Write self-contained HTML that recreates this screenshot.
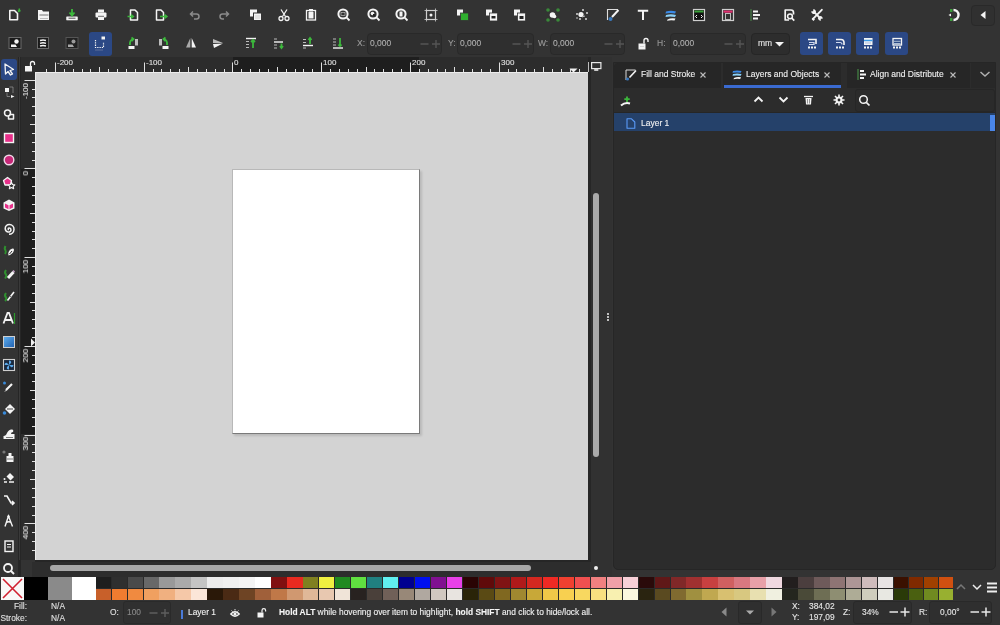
<!DOCTYPE html><html><head><meta charset="utf-8"><style>
html,body{margin:0;padding:0;width:1000px;height:625px;overflow:hidden;background:#333333;font-family:"Liberation Sans",sans-serif;}
body>div,body>span,body>svg{position:absolute;display:block;}
span{white-space:nowrap;line-height:1;will-change:transform;-webkit-text-stroke:0.1px currentColor;}
</style></head><body>
<div style="left:0px;top:0px;width:1000px;height:57px;background:#333333;"></div>
<div style="left:0px;top:57px;width:18px;height:520px;background:#333333;"></div>
<div style="left:18px;top:57px;width:3px;height:520px;background:#262626;"></div>
<div style="left:19px;top:57px;width:1px;height:503px;background:#3a3a3a;"></div>
<div style="left:21px;top:57px;width:567px;height:15px;background:#2c2c2c;"></div>
<div style="left:21px;top:72px;width:14px;height:488px;background:#2c2c2c;"></div>
<div style="left:233px;top:57px;width:186px;height:15px;background:#1e1e1e;"></div>
<div style="left:21px;top:169px;width:14px;height:265px;background:#1e1e1e;"></div>
<div style="left:35px;top:72px;width:553px;height:488px;background:#d3d3d3;"></div>
<div style="left:232px;top:169px;width:188px;height:265px;background:#ffffff;border-top:1px solid #b8b8b8;border-left:1px solid #b8b8b8;border-right:1px solid #7a7a7a;border-bottom:1px solid #7a7a7a;box-sizing:border-box;box-shadow:2px 2px 2px rgba(0,0,0,0.12);"></div>
<div style="left:35px;top:72px;width:553px;height:1px;background:#ececec;"></div>
<div style="left:35px;top:72px;width:1px;height:488px;background:#ececec;"></div>
<div style="left:21px;top:560px;width:591px;height:17px;background:#333333;"></div>
<div style="left:32px;top:562px;width:580px;height:15px;background:#2d2d2d;"></div>
<div style="left:35px;top:560px;width:555px;height:2px;background:#262626;"></div>
<div style="left:50px;top:565px;width:481px;height:6px;background:#a8a8a8;border-radius:3px;"></div>
<div style="left:590px;top:57px;width:22px;height:520px;background:#313131;"></div>
<div style="left:588px;top:57px;width:2.5px;height:505px;background:#262626;"></div>
<div style="left:594px;top:565.5px;width:4px;height:4px;background:#f0f0f0;border-radius:2px;"></div>
<div style="left:593px;top:193px;width:6px;height:264px;background:#aaaaaa;border-radius:3px;"></div>
<div style="left:606.5px;top:312.5px;width:2px;height:2px;background:#f0f0f0;border-radius:1px;"></div>
<div style="left:606.5px;top:315.8px;width:2px;height:2px;background:#f0f0f0;border-radius:1px;"></div>
<div style="left:606.5px;top:318.8px;width:2px;height:2px;background:#f0f0f0;border-radius:1px;"></div>
<div style="left:0px;top:577px;width:1000px;height:24px;background:#333333;"></div>
<div style="left:0px;top:601px;width:1000px;height:24px;background:#333333;"></div>
<svg style="left:6.5px;top:6.7px;" width="16" height="16" viewBox="0 0 16 16"><path d="M2.8 3.5H7.5L10.5 6.5V12.8H2.8Z" stroke="#f4f4f4" stroke-width="1.6" fill="none" stroke-linejoin="round"/><path d="M12.5 1.5L11.5 5M13.5 3.5L11 4.5" stroke="#3cb83c" stroke-width="1.4"/></svg>
<svg style="left:35.7px;top:6.7px;" width="16" height="16" viewBox="0 0 16 16"><path d="M2 3H6L7 4.5H13V13H2Z" fill="#f4f4f4"/><path d="M3.5 8H12.5" stroke="#555" stroke-width="0.8"/><path d="M4 11.5H12" stroke="#999" stroke-width="0.6"/></svg>
<svg style="left:64.0px;top:6.7px;" width="16" height="16" viewBox="0 0 16 16"><path d="M2.5 10V13H13.5V10" fill="#f4f4f4"/><rect x="2.5" y="9.5" width="11" height="3.8" fill="#f4f4f4"/><path d="M4.5 11.2H11.5" stroke="#555" stroke-width="1"/><path d="M8 2V8M5.5 5.5L8 8.5L10.5 5.5" stroke="#3cb83c" stroke-width="1.8" fill="none"/></svg>
<svg style="left:93.0px;top:6.7px;" width="16" height="16" viewBox="0 0 16 16"><rect x="5" y="2.5" width="6" height="3" fill="#f4f4f4"/><rect x="2.5" y="5.5" width="11" height="5" rx="1" fill="#f4f4f4"/><rect x="5" y="9" width="6" height="4" fill="#f4f4f4"/><path d="M5 9.3H11" stroke="#444" stroke-width="0.8"/></svg>
<svg style="left:125.8px;top:6.7px;" width="16" height="16" viewBox="0 0 16 16"><path d="M4.5 3H9L11.5 5.5V13H4.5Z" stroke="#f4f4f4" stroke-width="1.5" fill="none" stroke-linejoin="round"/><path d="M1.5 9.5H7.5M5 7.5L7.5 9.5L5 11.5" stroke="#3cb83c" stroke-width="1.4" fill="none"/></svg>
<svg style="left:153.0px;top:6.7px;" width="16" height="16" viewBox="0 0 16 16"><path d="M3.5 3H8L10.5 5.5V13H3.5Z" stroke="#f4f4f4" stroke-width="1.5" fill="none" stroke-linejoin="round"/><path d="M7 9.5H14M11.5 7.5L14 9.5L11.5 11.5" stroke="#3cb83c" stroke-width="1.4" fill="none"/></svg>
<svg style="left:187.0px;top:6.7px;" width="16" height="16" viewBox="0 0 16 16"><path d="M4 7H9.5A2.5 2.5 0 0 1 9.5 12H7M6 4.5L3.5 7L6 9.5" stroke="#8a8a8a" stroke-width="1.5" fill="none"/></svg>
<svg style="left:216.0px;top:6.7px;" width="16" height="16" viewBox="0 0 16 16"><path d="M12 7H6.5A2.5 2.5 0 0 0 6.5 12H8M10 4.5L12.5 7L10 9.5" stroke="#8a8a8a" stroke-width="1.5" fill="none"/></svg>
<svg style="left:247.6px;top:6.7px;" width="16" height="16" viewBox="0 0 16 16"><rect x="2" y="2.5" width="7" height="7" fill="#f4f4f4"/><rect x="5.5" y="6" width="8" height="7.5" fill="#f4f4f4" stroke="#333" stroke-width="1"/><path d="M7 9H12M7 11H12" stroke="#bbb" stroke-width="0.6"/></svg>
<svg style="left:275.8px;top:6.7px;" width="16" height="16" viewBox="0 0 16 16"><path d="M5 2.5L9.5 9.5M11 2.5L6.5 9.5" stroke="#f4f4f4" stroke-width="1.3"/><circle cx="5" cy="11.5" r="2" stroke="#f4f4f4" stroke-width="1.3" fill="none"/><circle cx="11" cy="11.5" r="2" stroke="#f4f4f4" stroke-width="1.3" fill="none"/></svg>
<svg style="left:303.0px;top:6.7px;" width="16" height="16" viewBox="0 0 16 16"><rect x="3.5" y="3.5" width="9" height="9.5" stroke="#f4f4f4" stroke-width="1.3" fill="none"/><rect x="5.5" y="5" width="5" height="6.5" fill="#f4f4f4"/><rect x="6" y="2" width="4" height="2.5" fill="#f4f4f4"/></svg>
<svg style="left:335.8px;top:6.7px;" width="16" height="16" viewBox="0 0 16 16"><circle cx="7" cy="7" r="4.6" stroke="#f4f4f4" stroke-width="2" fill="none"/><path d="M10.2 10.2L13.5 13.5" stroke="#f4f4f4" stroke-width="1.8"/><rect x="5" y="5.5" width="4" height="3" stroke="#bbb" stroke-width="0.7" fill="none"/></svg>
<svg style="left:365.8px;top:6.7px;" width="16" height="16" viewBox="0 0 16 16"><circle cx="7" cy="7" r="4.6" stroke="#f4f4f4" stroke-width="2" fill="none"/><path d="M10.2 10.2L13.5 13.5" stroke="#f4f4f4" stroke-width="1.8"/><circle cx="6.5" cy="6.5" r="1.8" fill="#f4f4f4"/><rect x="7" y="7" width="2.2" height="2.2" fill="#222"/></svg>
<svg style="left:394.0px;top:6.7px;" width="16" height="16" viewBox="0 0 16 16"><circle cx="7" cy="7" r="4.6" stroke="#f4f4f4" stroke-width="2" fill="none"/><path d="M10.2 10.2L13.5 13.5" stroke="#f4f4f4" stroke-width="1.8"/><rect x="5.5" y="4.5" width="3" height="5" fill="#f4f4f4"/></svg>
<svg style="left:422.6px;top:6.7px;" width="16" height="16" viewBox="0 0 16 16"><rect x="3.5" y="3.5" width="9" height="9" stroke="#cfcfcf" stroke-width="1.2" fill="none"/><path d="M1.5 3.5H3.5V1.5M12.5 1.5V3.5H14.5M14.5 12.5H12.5V14.5M3.5 14.5V12.5H1.5" stroke="#cfcfcf" stroke-width="0.8" fill="none"/><circle cx="8" cy="8" r="1.5" fill="#f4f4f4"/></svg>
<svg style="left:454.5px;top:6.7px;" width="16" height="16" viewBox="0 0 16 16"><rect x="2" y="2.5" width="6" height="6" fill="#f4f4f4"/><rect x="5.5" y="6" width="8" height="7.5" fill="#2fae2f" stroke="#333" stroke-width="0.8"/></svg>
<svg style="left:484.0px;top:6.7px;" width="16" height="16" viewBox="0 0 16 16"><rect x="2" y="2.5" width="6" height="6" fill="#f4f4f4"/><rect x="5.5" y="6" width="8" height="8" fill="#f4f4f4" stroke="#333" stroke-width="0.8"/><rect x="7.5" y="9" width="4" height="2.5" fill="#222"/></svg>
<svg style="left:512.0px;top:6.7px;" width="16" height="16" viewBox="0 0 16 16"><rect x="2" y="2.5" width="6" height="6" fill="#f4f4f4"/><rect x="5.5" y="6" width="8" height="8" fill="#f4f4f4" stroke="#333" stroke-width="0.8"/><rect x="7.5" y="9" width="4" height="3" fill="#222"/></svg>
<svg style="left:544.5px;top:6.7px;" width="16" height="16" viewBox="0 0 16 16"><g fill="#3a8a3a"><circle cx="3" cy="3" r="1.8"/><circle cx="13" cy="3" r="1.8"/><circle cx="3" cy="13" r="1.8"/><circle cx="13" cy="13" r="1.8"/></g><circle cx="7.5" cy="8" r="2.8" fill="#f4f4f4"/><circle cx="9.5" cy="9.5" r="1.8" fill="#f4f4f4"/></svg>
<svg style="left:574.0px;top:6.7px;" width="16" height="16" viewBox="0 0 16 16"><g fill="#d8d8d8"><circle cx="3" cy="7" r="1"/><circle cx="9" cy="3" r="1"/><circle cx="13" cy="6" r="1"/><circle cx="12" cy="12" r="1"/><circle cx="6" cy="12" r="1"/><circle cx="3" cy="11" r="0.8"/></g><circle cx="7" cy="7.5" r="2.6" fill="#f4f4f4"/><path d="M8 10L11 9" stroke="#bbb" stroke-width="1"/></svg>
<svg style="left:604.5px;top:6.7px;" width="16" height="16" viewBox="0 0 16 16"><path d="M2.5 13V2.5H13" stroke="#ddd" stroke-width="1.1" fill="none"/><path d="M13.5 3L7 10" stroke="#f4f4f4" stroke-width="2"/><circle cx="5.5" cy="12" r="2" fill="#3a7ac0"/></svg>
<svg style="left:634.5px;top:6.7px;" width="16" height="16" viewBox="0 0 16 16"><path d="M2.8 3.8H13.2M8 3.8V13" stroke="#f4f4f4" stroke-width="2"/></svg>
<svg style="left:663.0px;top:6.7px;" width="16" height="16" viewBox="0 0 16 16"><path d="M3 4.5Q8 3 13 4.5L12 6.5Q7 5.5 2.5 6.5Z" fill="#3a8ae8"/><path d="M3 8Q8 6.5 13 8L12 10Q7 9 2.5 10Z" fill="#8ad0f8"/><path d="M4.5 12.5Q8 10.5 12.5 11.5L11.5 13.5Q7 13 4 13.8Z" fill="#f4f4f4"/></svg>
<svg style="left:691.0px;top:6.7px;" width="16" height="16" viewBox="0 0 16 16"><rect x="2.5" y="2.5" width="11" height="11" stroke="#cfcfcf" stroke-width="1.2" fill="#111"/><rect x="3.5" y="3.5" width="9" height="2" fill="#3aa03a"/><path d="M6 8L4.5 9.5L6 11M10 8L11.5 9.5L10 11" stroke="#f4f4f4" stroke-width="1" fill="none"/></svg>
<svg style="left:719.5px;top:6.7px;" width="16" height="16" viewBox="0 0 16 16"><rect x="2.5" y="2.5" width="11" height="11" stroke="#cfcfcf" stroke-width="1.2" fill="none"/><rect x="3.5" y="3.5" width="9" height="2.2" fill="#e03070"/><rect x="5.5" y="6.5" width="5" height="6" stroke="#bbb" stroke-width="1" fill="none"/></svg>
<svg style="left:748.0px;top:6.7px;" width="16" height="16" viewBox="0 0 16 16"><path d="M3 2V14" stroke="#4a8a4a" stroke-width="1"/><path d="M5 4.5H10M5 8H12M5 11.5H10" stroke="#f4f4f4" stroke-width="1.8"/></svg>
<svg style="left:782.0px;top:6.7px;" width="16" height="16" viewBox="0 0 16 16"><path d="M7 13H3.2V3H9A2.5 2.5 0 0 1 11.5 5.5V7.5" stroke="#f4f4f4" stroke-width="1.7" fill="none" stroke-linejoin="round"/><circle cx="8" cy="9.3" r="2.4" stroke="#f4f4f4" stroke-width="1.5" fill="none"/><path d="M9.8 11.1L12.3 13.6" stroke="#f4f4f4" stroke-width="1.7"/></svg>
<svg style="left:809.0px;top:6.7px;" width="16" height="16" viewBox="0 0 16 16"><path d="M12.8 2.8L4 11.8" stroke="#f4f4f4" stroke-width="1.9" stroke-linecap="round"/><path d="M3.5 13L5 11.5" stroke="#f4f4f4" stroke-width="2.6"/><path d="M6.2 6.2L10 10" stroke="#f4f4f4" stroke-width="1.8"/><path d="M2.3 4.2A2.6 2.6 0 0 0 6.5 6.5A2.6 2.6 0 0 0 4.2 2.3L4.2 4.2Z" fill="#f4f4f4"/><path d="M13.7 11.8A2.6 2.6 0 0 0 9.5 9.5A2.6 2.6 0 0 0 11.8 13.7L11.8 11.8Z" fill="#f4f4f4"/></svg>
<svg style="left:944.5px;top:6.7px;" width="16" height="16" viewBox="0 0 16 16"><path d="M8.5 3A5 5 0 0 1 8.5 13" stroke="#f4f4f4" stroke-width="2.4" fill="none"/><rect x="5" y="2" width="2.5" height="3" fill="#3a9a3a"/><rect x="5" y="11" width="2.5" height="3" fill="#3a9a3a"/><path d="M3.5 8L6 6.5V9.5Z" fill="#f4f4f4"/></svg>
<div style="left:970.5px;top:4.5px;width:24px;height:21.5px;background:#303030;border:1px solid #292929;box-sizing:border-box;border-radius:4px;"></div>
<svg style="left:977px;top:9px;" width="12" height="12" viewBox="0 0 12 12"><path d="M8.5 2V10L3.5 6Z" fill="#f4f4f4"/></svg>
<svg style="left:7.0px;top:35.0px;" width="16" height="16" viewBox="0 0 16 16"><rect x="2" y="2.5" width="12" height="11" fill="#1a1a1a" stroke="#6a6a6a" stroke-width="1"/><circle cx="9.5" cy="6.5" r="2.2" fill="#f4f4f4"/><path d="M4 12V9.5H8.5L10 12Z" fill="#f4f4f4"/></svg>
<svg style="left:35.0px;top:35.0px;" width="16" height="16" viewBox="0 0 16 16"><rect x="2.5" y="2.5" width="11" height="11" fill="#1a1a1a" stroke="#6a6a6a" stroke-width="1"/><path d="M5 5.5Q8 4.5 11 5.5M5 8.3Q8 7.3 11 8.3M5 11Q8 10 11 11" stroke="#f4f4f4" stroke-width="1.4" fill="none"/></svg>
<svg style="left:64.0px;top:35.0px;" width="16" height="16" viewBox="0 0 16 16"><rect x="2" y="2.5" width="12" height="11" fill="#222" stroke="#555" stroke-width="1"/><circle cx="9.5" cy="6.5" r="2" fill="#999"/><path d="M4 12V9.5H8.5L10 12Z" fill="#aaa"/></svg>
<div style="left:88.5px;top:32px;width:23.5px;height:23.5px;background:#2b4885;border-radius:3px;"></div>
<svg style="left:92.3px;top:35.0px;" width="16" height="16" viewBox="0 0 16 16"><path d="M3.5 5V12.5H11.5V7" stroke="#f4f4f4" stroke-width="1.2" stroke-dasharray="1.3 1" fill="none"/><rect x="9.5" y="1.5" width="3.5" height="3" fill="#f4f4f4"/><path d="M3.5 15H11.5" stroke="#aab" stroke-width="0.8" stroke-dasharray="1 1"/></svg>
<svg style="left:125.8px;top:35.0px;" width="16" height="16" viewBox="0 0 16 16"><path d="M4 10Q3.5 5 7 4M5.5 2.5L7.5 4L5.5 6" stroke="#3cb83c" stroke-width="1.8" fill="none"/><rect x="9" y="4" width="3" height="6.5" fill="#bdbdbd"/><rect x="2.5" y="11" width="6" height="3" fill="#f4f4f4"/></svg>
<svg style="left:154.5px;top:35.0px;" width="16" height="16" viewBox="0 0 16 16"><path d="M12 10Q12.5 5 9 4M10.5 2.5L8.5 4L10.5 6" stroke="#3cb83c" stroke-width="1.8" fill="none"/><rect x="4" y="4" width="3" height="6.5" fill="#bdbdbd"/><rect x="7.5" y="11" width="6" height="3" fill="#f4f4f4"/></svg>
<svg style="left:182.6px;top:35.0px;" width="16" height="16" viewBox="0 0 16 16"><path d="M7.3 3V12.5H3Z" fill="#aaa"/><path d="M8.7 3V12.5H13Z" fill="#f4f4f4"/></svg>
<svg style="left:209.5px;top:35.0px;" width="16" height="16" viewBox="0 0 16 16"><path d="M3 4L13 8L3 8Z" fill="#bbb"/><path d="M3 9L13 8.5L4 13Z" fill="#f4f4f4"/></svg>
<svg style="left:243.0px;top:35.0px;" width="16" height="16" viewBox="0 0 16 16"><path d="M3 3.5H13" stroke="#f4f4f4" stroke-width="1.4"/><path d="M3 6.5H6M3 9.5H6M3 12.5H6" stroke="#bbb" stroke-width="1"/><path d="M10 13V5M8 7L10 5L12 7" stroke="#3cb83c" stroke-width="1.8" fill="none"/></svg>
<svg style="left:271.0px;top:35.0px;" width="16" height="16" viewBox="0 0 16 16"><path d="M3 7H12" stroke="#f4f4f4" stroke-width="1.4"/><path d="M3 4H6M3 10H6M3 13H6" stroke="#bbb" stroke-width="1"/><path d="M10.5 13V8.5M9 11L10.5 13L12 11" stroke="#3cb83c" stroke-width="1.8" fill="none"/></svg>
<svg style="left:300.0px;top:35.0px;" width="16" height="16" viewBox="0 0 16 16"><path d="M3 10.5H13" stroke="#f4f4f4" stroke-width="1.4"/><path d="M3 4.5H6M3 7.5H6M3 13H6" stroke="#bbb" stroke-width="1"/><path d="M10 9V3M8.5 5L10 3L11.5 5" stroke="#3cb83c" stroke-width="1.8" fill="none"/></svg>
<svg style="left:329.5px;top:35.0px;" width="16" height="16" viewBox="0 0 16 16"><path d="M3 13H13" stroke="#f4f4f4" stroke-width="1.4"/><path d="M3 4H6M3 7H6M3 10H6" stroke="#bbb" stroke-width="1"/><path d="M10 3V11M8.5 9.5L10 11L11.5 9.5" stroke="#3cb83c" stroke-width="1.8" fill="none"/></svg>
<span style="left:356.5px;top:39px;font-size:8.5px;color:#9a9a9a;font-weight:normal;">X:</span>
<div style="left:367px;top:32.5px;width:75.3px;height:22.5px;background:#2f2f2f;border:1px solid #292929;box-sizing:border-box;border-radius:4px;"></div>
<span style="left:370px;top:39px;font-size:8.5px;color:#b0b0b0;font-weight:normal;">0,000</span>
<svg style="left:419.3px;top:38px;" width="22" height="12" viewBox="0 0 22 12"><path d="M1.5 6H9.5M13 6H21M17 2V10" stroke="#555555" stroke-width="1.4"/></svg>
<span style="left:447.5px;top:39px;font-size:8.5px;color:#9a9a9a;font-weight:normal;">Y:</span>
<div style="left:456.7px;top:32.5px;width:77px;height:22.5px;background:#2f2f2f;border:1px solid #292929;box-sizing:border-box;border-radius:4px;"></div>
<span style="left:459.7px;top:39px;font-size:8.5px;color:#b0b0b0;font-weight:normal;">0,000</span>
<svg style="left:510.70000000000005px;top:38px;" width="22" height="12" viewBox="0 0 22 12"><path d="M1.5 6H9.5M13 6H21M17 2V10" stroke="#555555" stroke-width="1.4"/></svg>
<span style="left:537.5px;top:39px;font-size:8.5px;color:#9a9a9a;font-weight:normal;">W:</span>
<div style="left:550.3px;top:32.5px;width:75.2px;height:22.5px;background:#2f2f2f;border:1px solid #292929;box-sizing:border-box;border-radius:4px;"></div>
<span style="left:553.3px;top:39px;font-size:8.5px;color:#b0b0b0;font-weight:normal;">0,000</span>
<svg style="left:602.5px;top:38px;" width="22" height="12" viewBox="0 0 22 12"><path d="M1.5 6H9.5M13 6H21M17 2V10" stroke="#555555" stroke-width="1.4"/></svg>
<span style="left:656.8px;top:39px;font-size:8.5px;color:#9a9a9a;font-weight:normal;">H:</span>
<div style="left:669.5px;top:32.5px;width:76px;height:22.5px;background:#2f2f2f;border:1px solid #292929;box-sizing:border-box;border-radius:4px;"></div>
<span style="left:672.5px;top:39px;font-size:8.5px;color:#b0b0b0;font-weight:normal;">0,000</span>
<svg style="left:722.5px;top:38px;" width="22" height="12" viewBox="0 0 22 12"><path d="M1.5 6H9.5M13 6H21M17 2V10" stroke="#555555" stroke-width="1.4"/></svg>
<svg style="left:635.0px;top:36.0px;" width="16" height="16" viewBox="0 0 16 16"><rect x="3.5" y="7.5" width="7" height="6" fill="#f4f4f4"/><path d="M9 7.5V4.5A2 2 0 0 1 13 4.5V6" stroke="#f4f4f4" stroke-width="1.4" fill="none"/><path d="M5 10.5H9" stroke="#bbb" stroke-width="0.6"/></svg>
<div style="left:751px;top:32.5px;width:39px;height:22.5px;background:#2d2d2d;border:1px solid #262626;box-sizing:border-box;border-radius:4px;"></div>
<span style="left:758px;top:39px;font-size:8.5px;color:#e8e8e8;font-weight:normal;">mm</span>
<svg style="left:774px;top:40px;" width="11" height="8" viewBox="0 0 11 8"><path d="M1 2H10L5.5 6.5Z" fill="#f4f4f4"/></svg>
<div style="left:800px;top:32px;width:23px;height:23px;background:#2b4885;border-radius:3px;"></div>
<div style="left:828px;top:32px;width:23px;height:23px;background:#2b4885;border-radius:3px;"></div>
<div style="left:856px;top:32px;width:23px;height:23px;background:#2b4885;border-radius:3px;"></div>
<div style="left:885px;top:32px;width:23px;height:23px;background:#2b4885;border-radius:3px;"></div>
<svg style="left:803.5px;top:35.0px;" width="16" height="16" viewBox="0 0 16 16"><path d="M4 4.5H12V9" stroke="#f4f4f4" stroke-width="1.6" fill="none"/><path d="M5 7.5H10V9.5H5" stroke="#cfd8ee" stroke-width="1.2" fill="none"/><path d="M4 12.5H12" stroke="#f4f4f4" stroke-width="1.8" stroke-dasharray="2 1"/></svg>
<svg style="left:831.5px;top:35.0px;" width="16" height="16" viewBox="0 0 16 16"><path d="M4 4.5H9A3 3 0 0 1 12 7.5V10" stroke="#f4f4f4" stroke-width="1.6" fill="none"/><path d="M4 7.5H8A2 2 0 0 1 10 9.5" stroke="#cfd8ee" stroke-width="1.2" fill="none"/><path d="M4 12.5H12" stroke="#f4f4f4" stroke-width="1.8" stroke-dasharray="2 1"/></svg>
<svg style="left:860.0px;top:35.0px;" width="16" height="16" viewBox="0 0 16 16"><rect x="4" y="3" width="8.5" height="7" fill="#f4f4f4"/><path d="M4 5.5H12.5" stroke="#3a9ae8" stroke-width="1.5"/><path d="M5 8H11" stroke="#aabbdd" stroke-width="1"/><path d="M4 12.5H12.5" stroke="#f4f4f4" stroke-width="1.8" stroke-dasharray="2 1"/></svg>
<svg style="left:888.5px;top:35.0px;" width="16" height="16" viewBox="0 0 16 16"><rect x="4" y="3.5" width="8.5" height="6.5" stroke="#f4f4f4" stroke-width="1.3" fill="none"/><path d="M5 6.3H11.5M5 8.5H11.5" stroke="#bcd" stroke-width="0.9"/><path d="M4 12.5H12.5" stroke="#f4f4f4" stroke-width="1.8" stroke-dasharray="2 1"/></svg>
<div style="left:1px;top:58.5px;width:16px;height:21.5px;background:#2b4885;border-radius:3px;"></div>
<svg style="left:0.5px;top:61.0px;" width="16" height="16" viewBox="0 0 16 16"><path d="M4 3L12.5 8.5L9 9.5L11.5 13L9.5 14L7 10.5L4.5 13Z" stroke="#f4f4f4" stroke-width="1.3" fill="none" stroke-linejoin="round"/></svg>
<svg style="left:0.5px;top:83.5px;" width="16" height="16" viewBox="0 0 16 16"><rect x="4" y="4" width="4" height="4" fill="#f4f4f4"/><path d="M10 11L13.5 12.5L10 14Z" fill="#f4f4f4"/><path d="M6 8.5V12.5H9M8.5 3H12V9" stroke="#aaa" stroke-width="0.6" fill="none"/></svg>
<svg style="left:0.5px;top:106.0px;" width="16" height="16" viewBox="0 0 16 16"><circle cx="6.5" cy="7" r="3" stroke="#f4f4f4" stroke-width="1.5" fill="none"/><path d="M8.5 8.5H12.5V13H7.5V10" stroke="#f4f4f4" stroke-width="1.5" fill="none" stroke-linejoin="round"/></svg>
<svg style="left:0.5px;top:130.0px;" width="16" height="16" viewBox="0 0 16 16"><rect x="3.5" y="3.5" width="9" height="9" fill="#e8308a" stroke="#f4f4f4" stroke-width="1.4"/></svg>
<svg style="left:0.5px;top:152.0px;" width="16" height="16" viewBox="0 0 16 16"><circle cx="8" cy="8" r="4.8" fill="#c82878" stroke="#f0d8e8" stroke-width="1.4"/></svg>
<svg style="left:0.5px;top:175.0px;" width="16" height="16" viewBox="0 0 16 16"><path d="M6.5 2.5L10.5 5.5L9.5 10H4L2.5 5.5Z" fill="#e8308a" stroke="#f4f4f4" stroke-width="1.3" stroke-linejoin="round"/><path d="M10.5 7.5L11.5 9.5L13.8 9.8L12.2 11.4L12.6 13.6L10.5 12.5L8.4 13.6L8.8 11.4L7.2 9.8L9.5 9.5Z" fill="#333" stroke="#f4f4f4" stroke-width="1.2" stroke-linejoin="round"/></svg>
<svg style="left:0.5px;top:197.0px;" width="16" height="16" viewBox="0 0 16 16"><path d="M8 2.5L13.5 5.5V11.5L8 14L2.5 11.5V5.5Z" fill="#f4f4f4"/><path d="M4 6.5L7.5 8.3V12.3L4 10.5Z" fill="#e8308a"/><path d="M8.5 8.3L12 6.5V10.5L8.5 12.3Z" fill="#e8308a"/></svg>
<svg style="left:0.5px;top:220.5px;" width="16" height="16" viewBox="0 0 16 16"><path d="M8 8.8A0.9 0.9 0 0 1 8.2 7A2 2 0 0 1 10 9A2.5 2.5 0 0 1 7 11A3.6 3.6 0 0 1 4.2 7.5A4 4 0 0 1 8.5 3.5A4.8 4.8 0 0 1 13 8.5A5 5 0 0 1 8 13.3" stroke="#f4f4f4" stroke-width="1.5" fill="none"/></svg>
<svg style="left:0.5px;top:243.5px;" width="16" height="16" viewBox="0 0 16 16"><path d="M4.5 2Q3 4.5 4.5 6.5Q5.5 8 4 10" stroke="#2f8f2f" stroke-width="2" fill="none"/><path d="M7.5 11.5Q6.5 8 9.5 5.5Q12.5 3.5 13 5.5Q13 8.5 9 11Z" fill="#f4f4f4"/><path d="M8.5 10L11 7" stroke="#333" stroke-width="1"/></svg>
<svg style="left:0.5px;top:265.5px;" width="16" height="16" viewBox="0 0 16 16"><path d="M5 4Q3 6.5 5 8.5Q6 10 4 12.5" stroke="#2f8f2f" stroke-width="2" fill="none"/><path d="M7 12L12.5 6" stroke="#f4f4f4" stroke-width="3"/><path d="M12 4.5L13.5 6" stroke="#c8a0c8" stroke-width="1.5"/></svg>
<svg style="left:0.5px;top:287.5px;" width="16" height="16" viewBox="0 0 16 16"><path d="M5 5Q3 7.5 5 9.5Q6 11 4 13" stroke="#2f8f2f" stroke-width="2" fill="none"/><path d="M6.5 12.5L13 4" stroke="#f4f4f4" stroke-width="1.6"/><path d="M9 8L11 10" stroke="#555" stroke-width="0.8"/></svg>
<svg style="left:0.5px;top:310.0px;" width="16" height="16" viewBox="0 0 16 16"><path d="M2.5 13.5L6.5 3H8L12 13.5M4.2 10H10.3" stroke="#f4f4f4" stroke-width="1.8" fill="none"/><path d="M13.5 3V14" stroke="#2a9a2a" stroke-width="1.2"/></svg>
<svg style="left:0.5px;top:334.0px;" width="16" height="16" viewBox="0 0 16 16"><defs><linearGradient id="gg" x1="0" y1="0" x2="1" y2="1"><stop offset="0" stop-color="#60b0f0"/><stop offset="1" stop-color="#2060b0"/></linearGradient></defs><rect x="2.5" y="2.5" width="11" height="11" fill="url(#gg)" stroke="#cfcfcf" stroke-width="1"/></svg>
<svg style="left:0.5px;top:356.5px;" width="16" height="16" viewBox="0 0 16 16"><rect x="2.5" y="2.5" width="11" height="11" fill="#1a2a40" stroke="#cfcfcf" stroke-width="1.1"/><path d="M8 8L8 3.5Q11 4 10 6ZM8 8L12.5 8Q12 11 10 10ZM8 8L8 12.5Q5 12 6 10ZM8 8L3.5 8Q4 5 6 6Z" fill="#5aa8e8"/></svg>
<svg style="left:0.5px;top:379.0px;" width="16" height="16" viewBox="0 0 16 16"><path d="M5 11L11 5" stroke="#f4f4f4" stroke-width="2.2"/><path d="M4 12.5L5.5 11" stroke="#f4f4f4" stroke-width="1"/><circle cx="3.5" cy="4" r="1.5" fill="#3a8ad8"/></svg>
<svg style="left:0.5px;top:401.0px;" width="16" height="16" viewBox="0 0 16 16"><path d="M9 3L14 8L9 13L4 8Z" fill="#f4f4f4"/><path d="M6 8H12" stroke="#444" stroke-width="1"/><circle cx="3.5" cy="12" r="1.8" fill="#3a8ad8"/></svg>
<svg style="left:0.5px;top:425.5px;" width="16" height="16" viewBox="0 0 16 16"><path d="M2.5 13V10Q5 10 6 7Q8 3 11 3.5Q13 4 12 6Q10 6 10 8H13.5V13Z" fill="#f4f4f4"/><path d="M5 11.5H12" stroke="#444" stroke-width="0.7"/></svg>
<svg style="left:0.5px;top:447.5px;" width="16" height="16" viewBox="0 0 16 16"><rect x="5.5" y="8" width="7" height="6" fill="#f4f4f4"/><rect x="7.5" y="5" width="3" height="3" fill="#f4f4f4"/><circle cx="3" cy="4" r="1.6" fill="#777"/><path d="M6 11H12" stroke="#444" stroke-width="0.7"/></svg>
<svg style="left:0.5px;top:469.5px;" width="16" height="16" viewBox="0 0 16 16"><path d="M9 3L13 7L9.5 10.5L5.5 6.5Z" fill="#f4f4f4"/><path d="M3 12H6M8 12H13" stroke="#f4f4f4" stroke-width="1.4"/><circle cx="3.5" cy="9" r="1" fill="#f4f4f4"/></svg>
<svg style="left:0.5px;top:491.5px;" width="16" height="16" viewBox="0 0 16 16"><path d="M3 4H6L10 11H13M11 9L13 11L11 13" stroke="#f4f4f4" stroke-width="1.6" fill="none"/></svg>
<svg style="left:0.5px;top:513.0px;" width="16" height="16" viewBox="0 0 16 16"><path d="M4 13.5L7.5 3L11.5 13.5M5.5 9.5Q8 8 10 9.5" stroke="#f4f4f4" stroke-width="1.4" fill="none"/><circle cx="7.5" cy="3.5" r="1.2" fill="#f4f4f4"/></svg>
<svg style="left:0.5px;top:538.0px;" width="16" height="16" viewBox="0 0 16 16"><rect x="4" y="3" width="8" height="10.5" stroke="#f4f4f4" stroke-width="1.4" fill="none"/><path d="M6 6.5H10M6 9H10" stroke="#f4f4f4" stroke-width="1"/></svg>
<svg style="left:0.5px;top:560.5px;" width="16" height="16" viewBox="0 0 16 16"><circle cx="7" cy="7" r="4" stroke="#f4f4f4" stroke-width="1.8" fill="none"/><path d="M10 10L13 13" stroke="#f4f4f4" stroke-width="2"/></svg>
<svg style="left:20.5px;top:58.0px;" width="16" height="16" viewBox="0 0 16 16"><rect x="4" y="8" width="7" height="5.5" fill="#f4f4f4"/><path d="M9.5 8V5.5A2 2 0 0 1 13.5 5.5V7" stroke="#f4f4f4" stroke-width="1.3" fill="none"/></svg>
<svg style="left:589px;top:60px;" width="14" height="12" viewBox="0 0 14 12"><rect x="2.6" y="2.6" width="9.3" height="6" stroke="#e8e8e8" stroke-width="1.2" fill="none"/><path d="M5.2 10H9.3" stroke="#f0f0f0" stroke-width="1.6"/></svg>
<div style="left:588px;top:62px;width:1px;height:10px;background:#bdbdbd;"></div>
<div style="left:613px;top:62px;width:383px;height:508px;background:#2c2c2c;border:1px solid #262626;box-sizing:border-box;border-radius:0 0 5px 5px;"></div>
<div style="left:614px;top:63px;width:106.5px;height:25px;background:#262626;border-radius:4px 0 0 0;"></div>
<div style="left:723px;top:63px;width:118px;height:25px;background:#262626;"></div>
<div style="left:847px;top:63px;width:123px;height:25px;background:#262626;"></div>
<div style="left:971px;top:63px;width:24px;height:25px;background:#282828;"></div>
<div style="left:724px;top:85px;width:117px;height:3px;background:#3a6ad0;"></div>
<svg style="left:623.0px;top:67.0px;" width="14" height="14" viewBox="0 0 14 14"><path d="M3 13V3H12.5" stroke="#d8d8d8" stroke-width="1" fill="none"/><path d="M13 3.5L6.5 10.5" stroke="#f4f4f4" stroke-width="1.6"/><circle cx="4.5" cy="12" r="1.6" fill="#3a7ac0"/></svg>
<span style="left:641px;top:70px;font-size:8.5px;color:#f2f2f2;font-weight:normal;">Fill and Stroke</span>
<svg style="left:699px;top:70.5px;" width="8" height="8" viewBox="0 0 8 8"><path d="M1.5 1.5L6.5 6.5M6.5 1.5L1.5 6.5" stroke="#bdbdbd" stroke-width="1.1"/></svg>
<svg style="left:730.0px;top:67.0px;" width="14" height="14" viewBox="0 0 14 14"><path d="M3 4Q7 2.8 11.5 4L10.8 5.8Q6.5 5 2.5 5.8Z" fill="#3a8ae8"/><path d="M3 7Q7 5.8 11.5 7L10.8 8.8Q6.5 8 2.5 8.8Z" fill="#8ad0f8"/><path d="M4 11Q7 9.3 11 10.2L10.2 12Q6.5 11.5 3.5 12.2Z" fill="#f4f4f4"/></svg>
<span style="left:745.5px;top:70px;font-size:8.5px;color:#f2f2f2;font-weight:normal;">Layers and Objects</span>
<svg style="left:823px;top:70.5px;" width="8" height="8" viewBox="0 0 8 8"><path d="M1.5 1.5L6.5 6.5M6.5 1.5L1.5 6.5" stroke="#bdbdbd" stroke-width="1.1"/></svg>
<svg style="left:855.0px;top:67.0px;" width="14" height="14" viewBox="0 0 14 14"><path d="M3 2V13" stroke="#4a9a4a" stroke-width="1"/><path d="M5 4H9M5 7.5H11M5 11H9" stroke="#f4f4f4" stroke-width="1.8"/></svg>
<span style="left:870px;top:70px;font-size:8.5px;color:#f2f2f2;font-weight:normal;">Align and Distribute</span>
<svg style="left:949px;top:70.5px;" width="8" height="8" viewBox="0 0 8 8"><path d="M1.5 1.5L6.5 6.5M6.5 1.5L1.5 6.5" stroke="#bdbdbd" stroke-width="1.1"/></svg>
<svg style="left:979px;top:69px;" width="12" height="10" viewBox="0 0 12 10"><path d="M1.5 3L6 7L10.5 3" stroke="#b0b0b0" stroke-width="1.5" fill="none"/></svg>
<div style="left:855px;top:88.5px;width:140px;height:23px;background:#2b2b2b;border:1px solid #262626;box-sizing:border-box;border-radius:3px;"></div>
<div style="left:614px;top:111.5px;width:381px;height:1.5px;background:#262626;"></div>
<svg style="left:618.0px;top:93.0px;" width="14" height="14" viewBox="0 0 14 14"><path d="M3 12.5Q7 9 12 10.5" stroke="#f4f4f4" stroke-width="2" fill="none"/><path d="M9 3.5V9M6.3 6.2H11.7" stroke="#3cb83c" stroke-width="1.8"/></svg>
<svg style="left:753px;top:95px;" width="11" height="9" viewBox="0 0 11 9"><path d="M1.5 6.5L5.5 2.5L9.5 6.5" stroke="#f4f4f4" stroke-width="1.8" fill="none"/></svg>
<svg style="left:778px;top:95px;" width="11" height="9" viewBox="0 0 11 9"><path d="M1.5 2.5L5.5 6.5L9.5 2.5" stroke="#f4f4f4" stroke-width="1.8" fill="none"/></svg>
<svg style="left:803px;top:94px;" width="11" height="12" viewBox="0 0 11 12"><path d="M1 2.5H10" stroke="#f4f4f4" stroke-width="1.3"/><path d="M2.5 4H8.5L8 10.5H3Z" fill="#f4f4f4"/><path d="M4.5 5V9.5M6.5 5V9.5" stroke="#555" stroke-width="0.6"/></svg>
<svg style="left:833px;top:94px;" width="12" height="12" viewBox="0 0 12 12"><circle cx="6" cy="6" r="3.5" fill="#f4f4f4"/><g stroke="#f4f4f4" stroke-width="1.6"><path d="M6 0.5V11.5M0.5 6H11.5M2 2L10 10M10 2L2 10"/></g><circle cx="6" cy="6" r="1.4" fill="#2c2c2c"/></svg>
<svg style="left:858px;top:94px;" width="13" height="13" viewBox="0 0 13 13"><circle cx="5.5" cy="5.5" r="3.8" stroke="#f4f4f4" stroke-width="1.5" fill="none"/><path d="M8.3 8.3L11.5 11.5" stroke="#f4f4f4" stroke-width="1.7"/></svg>
<div style="left:614px;top:113px;width:381px;height:18px;background:#25416a;"></div>
<div style="left:990px;top:115px;width:4.5px;height:16px;background:#4a86e8;"></div>
<svg style="left:626px;top:118px;" width="10" height="11" viewBox="0 0 10 11"><path d="M1 0.8H5.5L8.8 4V10.2H1Z" stroke="#5a9af8" stroke-width="1.1" fill="none" stroke-linejoin="round"/></svg>
<span style="left:641px;top:118.5px;font-size:8.5px;color:#f2f2f2;font-weight:normal;">Layer 1</span>
<svg style="left:0px;top:0px;" width="600" height="570" viewBox="0 0 600 570"><g stroke="#e0e0e0" stroke-width="1" fill="none"><path d="M46.5 69V72" /><path d="M55.5 62.5V72" /><path d="M64.5 69V72" /><path d="M73.5 69V72" /><path d="M82.5 69V72" /><path d="M90.5 69V72" /><path d="M99.5 67V72" /><path d="M108.5 69V72" /><path d="M117.5 69V72" /><path d="M126.5 69V72" /><path d="M135.5 69V72" /><path d="M144.5 62.5V72" /><path d="M153.5 69V72" /><path d="M161.5 69V72" /><path d="M170.5 69V72" /><path d="M179.5 69V72" /><path d="M188.5 67V72" /><path d="M197.5 69V72" /><path d="M206.5 69V72" /><path d="M215.5 69V72" /><path d="M224.5 69V72" /><path d="M232.5 62.5V72" /><path d="M241.5 69V72" /><path d="M250.5 69V72" /><path d="M259.5 69V72" /><path d="M268.5 69V72" /><path d="M277.5 67V72" /><path d="M286.5 69V72" /><path d="M295.5 69V72" /><path d="M303.5 69V72" /><path d="M312.5 69V72" /><path d="M321.5 62.5V72" /><path d="M330.5 69V72" /><path d="M339.5 69V72" /><path d="M348.5 69V72" /><path d="M357.5 69V72" /><path d="M366.5 67V72" /><path d="M374.5 69V72" /><path d="M383.5 69V72" /><path d="M392.5 69V72" /><path d="M401.5 69V72" /><path d="M410.5 62.5V72" /><path d="M419.5 69V72" /><path d="M428.5 69V72" /><path d="M437.5 69V72" /><path d="M445.5 69V72" /><path d="M454.5 67V72" /><path d="M463.5 69V72" /><path d="M472.5 69V72" /><path d="M481.5 69V72" /><path d="M490.5 69V72" /><path d="M499.5 62.5V72" /><path d="M508.5 69V72" /><path d="M516.5 69V72" /><path d="M525.5 69V72" /><path d="M534.5 69V72" /><path d="M543.5 67V72" /><path d="M552.5 69V72" /><path d="M561.5 69V72" /><path d="M570.5 69V72" /><path d="M579.5 69V72" /><path d="M24.5 80.5H35" /><path d="M32 89.5H35" /><path d="M32 97.5H35" /><path d="M32 106.5H35" /><path d="M32 115.5H35" /><path d="M30 124.5H35" /><path d="M32 133.5H35" /><path d="M32 142.5H35" /><path d="M32 151.5H35" /><path d="M32 160.5H35" /><path d="M24.5 168.5H35" /><path d="M32 177.5H35" /><path d="M32 186.5H35" /><path d="M32 195.5H35" /><path d="M32 204.5H35" /><path d="M30 213.5H35" /><path d="M32 222.5H35" /><path d="M32 231.5H35" /><path d="M32 239.5H35" /><path d="M32 248.5H35" /><path d="M24.5 257.5H35" /><path d="M32 266.5H35" /><path d="M32 275.5H35" /><path d="M32 284.5H35" /><path d="M32 293.5H35" /><path d="M30 302.5H35" /><path d="M32 310.5H35" /><path d="M32 319.5H35" /><path d="M32 328.5H35" /><path d="M32 337.5H35" /><path d="M24.5 346.5H35" /><path d="M32 355.5H35" /><path d="M32 364.5H35" /><path d="M32 373.5H35" /><path d="M32 381.5H35" /><path d="M30 390.5H35" /><path d="M32 399.5H35" /><path d="M32 408.5H35" /><path d="M32 417.5H35" /><path d="M32 426.5H35" /><path d="M24.5 435.5H35" /><path d="M32 444.5H35" /><path d="M32 452.5H35" /><path d="M32 461.5H35" /><path d="M32 470.5H35" /><path d="M30 479.5H35" /><path d="M32 488.5H35" /><path d="M32 497.5H35" /><path d="M32 506.5H35" /><path d="M32 515.5H35" /><path d="M24.5 523.5H35" /><path d="M32 532.5H35" /><path d="M32 541.5H35" /><path d="M32 550.5H35" /></g><path d="M569.5 68.5H577.5L573.5 72.5Z" fill="#f0f0f0"/><path d="M31 338.5V346.5L35 342.5Z" fill="#f0f0f0"/></svg>
<span style="left:56.9px;top:59.3px;font-size:8px;color:#e0e0e0;font-weight:normal;">-200</span>
<span style="left:145.7px;top:59.3px;font-size:8px;color:#e0e0e0;font-weight:normal;">-100</span>
<span style="left:234.4px;top:59.3px;font-size:8px;color:#e0e0e0;font-weight:normal;">0</span>
<span style="left:323.1px;top:59.3px;font-size:8px;color:#e0e0e0;font-weight:normal;">100</span>
<span style="left:411.9px;top:59.3px;font-size:8px;color:#e0e0e0;font-weight:normal;">200</span>
<span style="left:500.6px;top:59.3px;font-size:8px;color:#e0e0e0;font-weight:normal;">300</span>
<span style="left:22px;top:82.5px;font-size:8px;color:#e0e0e0;transform-origin:0 0;transform:translate(0px,0px) rotate(-90deg) translate(-100%,0);">-100</span>
<span style="left:22px;top:171.2px;font-size:8px;color:#e0e0e0;transform-origin:0 0;transform:translate(0px,0px) rotate(-90deg) translate(-100%,0);">0</span>
<span style="left:22px;top:259.9px;font-size:8px;color:#e0e0e0;transform-origin:0 0;transform:translate(0px,0px) rotate(-90deg) translate(-100%,0);">100</span>
<span style="left:22px;top:348.7px;font-size:8px;color:#e0e0e0;transform-origin:0 0;transform:translate(0px,0px) rotate(-90deg) translate(-100%,0);">200</span>
<span style="left:22px;top:437.4px;font-size:8px;color:#e0e0e0;transform-origin:0 0;transform:translate(0px,0px) rotate(-90deg) translate(-100%,0);">300</span>
<span style="left:22px;top:526.2px;font-size:8px;color:#e0e0e0;transform-origin:0 0;transform:translate(0px,0px) rotate(-90deg) translate(-100%,0);">400</span>
<div style="left:95.2px;top:576.5px;width:858.3px;height:23.5px;background:#2a2a2a;"></div>
<div style="left:95.6px;top:576.5px;width:15.27px;height:11.6px;background:#1e1e1e;"></div>
<div style="left:95.6px;top:588.6px;width:15.27px;height:11.4px;background:#c8602a;"></div>
<div style="left:111.57px;top:576.5px;width:15.27px;height:11.6px;background:#2f2f2f;"></div>
<div style="left:111.57px;top:588.6px;width:15.27px;height:11.4px;background:#f07c30;"></div>
<div style="left:127.54px;top:576.5px;width:15.27px;height:11.6px;background:#4a4a4a;"></div>
<div style="left:127.54px;top:588.6px;width:15.27px;height:11.4px;background:#f08a40;"></div>
<div style="left:143.51px;top:576.5px;width:15.27px;height:11.6px;background:#686868;"></div>
<div style="left:143.51px;top:588.6px;width:15.27px;height:11.4px;background:#f0a060;"></div>
<div style="left:159.48px;top:576.5px;width:15.27px;height:11.6px;background:#999999;"></div>
<div style="left:159.48px;top:588.6px;width:15.27px;height:11.4px;background:#f0b080;"></div>
<div style="left:175.45px;top:576.5px;width:15.27px;height:11.6px;background:#aaaaaa;"></div>
<div style="left:175.45px;top:588.6px;width:15.27px;height:11.4px;background:#f5c8a8;"></div>
<div style="left:191.42px;top:576.5px;width:15.27px;height:11.6px;background:#c4c4c4;"></div>
<div style="left:191.42px;top:588.6px;width:15.27px;height:11.4px;background:#fbe6d8;"></div>
<div style="left:207.39px;top:576.5px;width:15.27px;height:11.6px;background:#ececec;"></div>
<div style="left:207.39px;top:588.6px;width:15.27px;height:11.4px;background:#2a1808;"></div>
<div style="left:223.36px;top:576.5px;width:15.27px;height:11.6px;background:#f0f0f0;"></div>
<div style="left:223.36px;top:588.6px;width:15.27px;height:11.4px;background:#4a2a14;"></div>
<div style="left:239.33px;top:576.5px;width:15.27px;height:11.6px;background:#f4f4f4;"></div>
<div style="left:239.33px;top:588.6px;width:15.27px;height:11.4px;background:#6e4424;"></div>
<div style="left:255.3px;top:576.5px;width:15.27px;height:11.6px;background:#ffffff;"></div>
<div style="left:255.3px;top:588.6px;width:15.27px;height:11.4px;background:#a0603a;"></div>
<div style="left:271.27px;top:576.5px;width:15.27px;height:11.6px;background:#801010;"></div>
<div style="left:271.27px;top:588.6px;width:15.27px;height:11.4px;background:#c07848;"></div>
<div style="left:287.24px;top:576.5px;width:15.27px;height:11.6px;background:#e82a20;"></div>
<div style="left:287.24px;top:588.6px;width:15.27px;height:11.4px;background:#d09870;"></div>
<div style="left:303.21px;top:576.5px;width:15.27px;height:11.6px;background:#808020;"></div>
<div style="left:303.21px;top:588.6px;width:15.27px;height:11.4px;background:#e0b898;"></div>
<div style="left:319.18px;top:576.5px;width:15.27px;height:11.6px;background:#f0f040;"></div>
<div style="left:319.18px;top:588.6px;width:15.27px;height:11.4px;background:#e8c8b0;"></div>
<div style="left:335.15px;top:576.5px;width:15.27px;height:11.6px;background:#208a20;"></div>
<div style="left:335.15px;top:588.6px;width:15.27px;height:11.4px;background:#f0e4d8;"></div>
<div style="left:351.12px;top:576.5px;width:15.27px;height:11.6px;background:#60e040;"></div>
<div style="left:351.12px;top:588.6px;width:15.27px;height:11.4px;background:#282220;"></div>
<div style="left:367.09px;top:576.5px;width:15.27px;height:11.6px;background:#208080;"></div>
<div style="left:367.09px;top:588.6px;width:15.27px;height:11.4px;background:#4a403a;"></div>
<div style="left:383.06px;top:576.5px;width:15.27px;height:11.6px;background:#60f0f0;"></div>
<div style="left:383.06px;top:588.6px;width:15.27px;height:11.4px;background:#706058;"></div>
<div style="left:399.03px;top:576.5px;width:15.27px;height:11.6px;background:#000090;"></div>
<div style="left:399.03px;top:588.6px;width:15.27px;height:11.4px;background:#988878;"></div>
<div style="left:415.0px;top:576.5px;width:15.27px;height:11.6px;background:#0010f0;"></div>
<div style="left:415.0px;top:588.6px;width:15.27px;height:11.4px;background:#b0a8a0;"></div>
<div style="left:430.97px;top:576.5px;width:15.27px;height:11.6px;background:#801090;"></div>
<div style="left:430.97px;top:588.6px;width:15.27px;height:11.4px;background:#d0c8c0;"></div>
<div style="left:446.94px;top:576.5px;width:15.27px;height:11.6px;background:#e840e8;"></div>
<div style="left:446.94px;top:588.6px;width:15.27px;height:11.4px;background:#e8e4e0;"></div>
<div style="left:462.91px;top:576.5px;width:15.27px;height:11.6px;background:#2a0404;"></div>
<div style="left:462.91px;top:588.6px;width:15.27px;height:11.4px;background:#2a2408;"></div>
<div style="left:478.88px;top:576.5px;width:15.27px;height:11.6px;background:#600a0a;"></div>
<div style="left:478.88px;top:588.6px;width:15.27px;height:11.4px;background:#5a4a14;"></div>
<div style="left:494.85px;top:576.5px;width:15.27px;height:11.6px;background:#801414;"></div>
<div style="left:494.85px;top:588.6px;width:15.27px;height:11.4px;background:#806820;"></div>
<div style="left:510.82px;top:576.5px;width:15.27px;height:11.6px;background:#b01a1a;"></div>
<div style="left:510.82px;top:588.6px;width:15.27px;height:11.4px;background:#a08830;"></div>
<div style="left:526.79px;top:576.5px;width:15.27px;height:11.6px;background:#d42820;"></div>
<div style="left:526.79px;top:588.6px;width:15.27px;height:11.4px;background:#c8a838;"></div>
<div style="left:542.76px;top:576.5px;width:15.27px;height:11.6px;background:#f02a24;"></div>
<div style="left:542.76px;top:588.6px;width:15.27px;height:11.4px;background:#f0c848;"></div>
<div style="left:558.73px;top:576.5px;width:15.27px;height:11.6px;background:#f04030;"></div>
<div style="left:558.73px;top:588.6px;width:15.27px;height:11.4px;background:#f8d050;"></div>
<div style="left:574.7px;top:576.5px;width:15.27px;height:11.6px;background:#f05050;"></div>
<div style="left:574.7px;top:588.6px;width:15.27px;height:11.4px;background:#f8d860;"></div>
<div style="left:590.67px;top:576.5px;width:15.27px;height:11.6px;background:#f08080;"></div>
<div style="left:590.67px;top:588.6px;width:15.27px;height:11.4px;background:#f8e080;"></div>
<div style="left:606.64px;top:576.5px;width:15.27px;height:11.6px;background:#f0a0a8;"></div>
<div style="left:606.64px;top:588.6px;width:15.27px;height:11.4px;background:#f8f0b0;"></div>
<div style="left:622.61px;top:576.5px;width:15.27px;height:11.6px;background:#f8d0d8;"></div>
<div style="left:622.61px;top:588.6px;width:15.27px;height:11.4px;background:#fcf8e0;"></div>
<div style="left:638.58px;top:576.5px;width:15.27px;height:11.6px;background:#2a0a0a;"></div>
<div style="left:638.58px;top:588.6px;width:15.27px;height:11.4px;background:#2a2410;"></div>
<div style="left:654.55px;top:576.5px;width:15.27px;height:11.6px;background:#601818;"></div>
<div style="left:654.55px;top:588.6px;width:15.27px;height:11.4px;background:#5a4a20;"></div>
<div style="left:670.52px;top:576.5px;width:15.27px;height:11.6px;background:#802828;"></div>
<div style="left:670.52px;top:588.6px;width:15.27px;height:11.4px;background:#806a30;"></div>
<div style="left:686.49px;top:576.5px;width:15.27px;height:11.6px;background:#a03030;"></div>
<div style="left:686.49px;top:588.6px;width:15.27px;height:11.4px;background:#a09040;"></div>
<div style="left:702.46px;top:576.5px;width:15.27px;height:11.6px;background:#c84040;"></div>
<div style="left:702.46px;top:588.6px;width:15.27px;height:11.4px;background:#c0a850;"></div>
<div style="left:718.43px;top:576.5px;width:15.27px;height:11.6px;background:#d06060;"></div>
<div style="left:718.43px;top:588.6px;width:15.27px;height:11.4px;background:#d8c070;"></div>
<div style="left:734.4px;top:576.5px;width:15.27px;height:11.6px;background:#d87880;"></div>
<div style="left:734.4px;top:588.6px;width:15.27px;height:11.4px;background:#d8c880;"></div>
<div style="left:750.37px;top:576.5px;width:15.27px;height:11.6px;background:#e8a0a8;"></div>
<div style="left:750.37px;top:588.6px;width:15.27px;height:11.4px;background:#e8e0b0;"></div>
<div style="left:766.34px;top:576.5px;width:15.27px;height:11.6px;background:#f0d8e0;"></div>
<div style="left:766.34px;top:588.6px;width:15.27px;height:11.4px;background:#f0f0e0;"></div>
<div style="left:782.31px;top:576.5px;width:15.27px;height:11.6px;background:#221e1e;"></div>
<div style="left:782.31px;top:588.6px;width:15.27px;height:11.4px;background:#24261e;"></div>
<div style="left:798.28px;top:576.5px;width:15.27px;height:11.6px;background:#4b3e3e;"></div>
<div style="left:798.28px;top:588.6px;width:15.27px;height:11.4px;background:#4a4a38;"></div>
<div style="left:814.25px;top:576.5px;width:15.27px;height:11.6px;background:#6e5a5a;"></div>
<div style="left:814.25px;top:588.6px;width:15.27px;height:11.4px;background:#6e6e54;"></div>
<div style="left:830.22px;top:576.5px;width:15.27px;height:11.6px;background:#8e7474;"></div>
<div style="left:830.22px;top:588.6px;width:15.27px;height:11.4px;background:#8e8e72;"></div>
<div style="left:846.19px;top:576.5px;width:15.27px;height:11.6px;background:#ad9696;"></div>
<div style="left:846.19px;top:588.6px;width:15.27px;height:11.4px;background:#aeac96;"></div>
<div style="left:862.16px;top:576.5px;width:15.27px;height:11.6px;background:#cfbcbc;"></div>
<div style="left:862.16px;top:588.6px;width:15.27px;height:11.4px;background:#cfcdbd;"></div>
<div style="left:878.13px;top:576.5px;width:15.27px;height:11.6px;background:#e8e4e4;"></div>
<div style="left:878.13px;top:588.6px;width:15.27px;height:11.4px;background:#e8e8e2;"></div>
<div style="left:894.1px;top:576.5px;width:14.25px;height:11.6px;background:#3a1000;"></div>
<div style="left:894.1px;top:588.6px;width:14.25px;height:11.4px;background:#2a3a08;"></div>
<div style="left:909.05px;top:576.5px;width:14.25px;height:11.6px;background:#802a00;"></div>
<div style="left:909.05px;top:588.6px;width:14.25px;height:11.4px;background:#4a6010;"></div>
<div style="left:924.0px;top:576.5px;width:14.25px;height:11.6px;background:#a04000;"></div>
<div style="left:924.0px;top:588.6px;width:14.25px;height:11.4px;background:#708a20;"></div>
<div style="left:938.95px;top:576.5px;width:14.25px;height:11.6px;background:#d05010;"></div>
<div style="left:938.95px;top:588.6px;width:14.25px;height:11.4px;background:#98b030;"></div>
<div style="left:1px;top:577px;width:23px;height:23px;background:#f8f8f8;"></div>
<svg style="left:1px;top:577px;" width="23" height="23" viewBox="0 0 23 23"><path d="M2 2L21 21M21 2L2 21" stroke="#d02030" stroke-width="1.6"/></svg>
<div style="left:24px;top:577px;width:24px;height:23px;background:#000000;"></div>
<div style="left:48px;top:577px;width:24px;height:23px;background:#8a8a8a;"></div>
<div style="left:72px;top:577px;width:24px;height:23px;background:#ffffff;"></div>
<svg style="left:955px;top:582px;" width="12" height="10" viewBox="0 0 12 10"><path d="M2 7L6 3L10 7" stroke="#777" stroke-width="1.5" fill="none"/></svg>
<svg style="left:971px;top:582px;" width="12" height="10" viewBox="0 0 12 10"><path d="M2 3L6 7L10 3" stroke="#eee" stroke-width="1.5" fill="none"/></svg>
<svg style="left:985px;top:580px;" width="14" height="14" viewBox="0 0 14 14"><path d="M2 3.5H12M2 7.5H12M2 11.5H12" stroke="#eee" stroke-width="1.8"/></svg>
<span style="left:0px;top:602px;width:27px;text-align:right;font-size:8.4px;color:#e0e0e0;">Fill:</span>
<span style="left:0px;top:614px;width:27px;text-align:right;font-size:8.4px;color:#e0e0e0;">Stroke:</span>
<span style="left:51px;top:602px;font-size:8.4px;color:#e0e0e0;font-weight:normal;">N/A</span>
<span style="left:51px;top:614px;font-size:8.4px;color:#e0e0e0;font-weight:normal;">N/A</span>
<span style="left:110px;top:608px;font-size:8.4px;color:#e0e0e0;font-weight:normal;">O:</span>
<div style="left:123px;top:601px;width:48px;height:23px;background:#303030;border:1px solid #2a2a2a;box-sizing:border-box;border-radius:3px;"></div>
<span style="left:127px;top:608px;font-size:8.4px;color:#8a8a8a;font-weight:normal;">100</span>
<svg style="left:148px;top:607px;" width="22" height="12" viewBox="0 0 22 12"><path d="M1.5 6H9.5M13 6H21M17 2V10" stroke="#5e5e5e" stroke-width="1.4"/></svg>
<div style="left:181px;top:610px;width:2px;height:9px;background:#4a7ad8;"></div>
<span style="left:188px;top:608px;font-size:8.4px;color:#f2f2f2;font-weight:normal;">Layer 1</span>
<svg style="left:228.0px;top:605.5px;" width="14" height="14" viewBox="0 0 14 14"><path d="M2.8 8Q7 3.5 11.2 8Q7 12.5 2.8 8Z" stroke="#f4f4f4" stroke-width="1.4" fill="none"/><circle cx="7" cy="8" r="1.6" fill="#f4f4f4"/><path d="M3.5 4.5L4.5 5.5M10.5 4.5L9.5 5.5M7 3V4.5" stroke="#f4f4f4" stroke-width="0.9"/></svg>
<svg style="left:254.0px;top:605.0px;" width="14" height="14" viewBox="0 0 14 14"><rect x="3.5" y="7.5" width="6" height="5" fill="#f4f4f4"/><path d="M8 7.5V5.5A1.8 1.8 0 0 1 11.6 5.5V6.5" stroke="#f4f4f4" stroke-width="1.2" fill="none"/></svg>
<span style="left:279px;top:608px;font-size:8.4px;color:#f4f4f4;font-weight:normal;"><b>Hold ALT</b> while hovering over item to highlight, <b>hold SHIFT</b> and click to hide/lock all.</span>
<svg style="left:719px;top:606px;" width="10" height="12" viewBox="0 0 10 12"><path d="M7.5 1.5V10.5L2.5 6Z" fill="#8a8a8a"/></svg>
<div style="left:738px;top:601px;width:24px;height:23px;background:#2f2f2f;border:1px solid #292929;box-sizing:border-box;border-radius:3px;"></div>
<svg style="left:745px;top:609px;" width="10" height="8" viewBox="0 0 10 8"><path d="M1 1.5H9L5 5.5Z" fill="#aaa"/></svg>
<svg style="left:769px;top:606px;" width="10" height="12" viewBox="0 0 10 12"><path d="M2.5 1.5V10.5L7.5 6Z" fill="#777"/></svg>
<span style="left:792px;top:601.5px;font-size:8.4px;color:#e8e8e8;font-weight:normal;">X:</span>
<span style="left:809px;top:601.5px;font-size:8.4px;color:#e8e8e8;font-weight:normal;">384,02</span>
<span style="left:792px;top:613px;font-size:8.4px;color:#e8e8e8;font-weight:normal;">Y:</span>
<span style="left:809px;top:613px;font-size:8.4px;color:#e8e8e8;font-weight:normal;">197,09</span>
<span style="left:843px;top:608px;font-size:8.4px;color:#e8e8e8;font-weight:normal;">Z:</span>
<div style="left:853px;top:601px;width:59px;height:23px;background:#2f2f2f;border:1px solid #292929;box-sizing:border-box;border-radius:3px;"></div>
<span style="left:862px;top:608px;font-size:8.4px;color:#e8e8e8;font-weight:normal;">34%</span>
<svg style="left:888px;top:606px;" width="24" height="12" viewBox="0 0 24 12"><path d="M1.5 6H10M12.5 6H21.5M17 1.5V10.5" stroke="#e8e8e8" stroke-width="1.5"/></svg>
<span style="left:919px;top:608px;font-size:8.4px;color:#e8e8e8;font-weight:normal;">R:</span>
<div style="left:929px;top:601px;width:63px;height:23px;background:#2f2f2f;border:1px solid #292929;box-sizing:border-box;border-radius:3px;"></div>
<span style="left:940px;top:608px;font-size:8.4px;color:#e8e8e8;font-weight:normal;">0,00°</span>
<svg style="left:969px;top:606px;" width="24" height="12" viewBox="0 0 24 12"><path d="M1.5 6H10M12.5 6H21.5M17 1.5V10.5" stroke="#e8e8e8" stroke-width="1.5"/></svg>
</body></html>
